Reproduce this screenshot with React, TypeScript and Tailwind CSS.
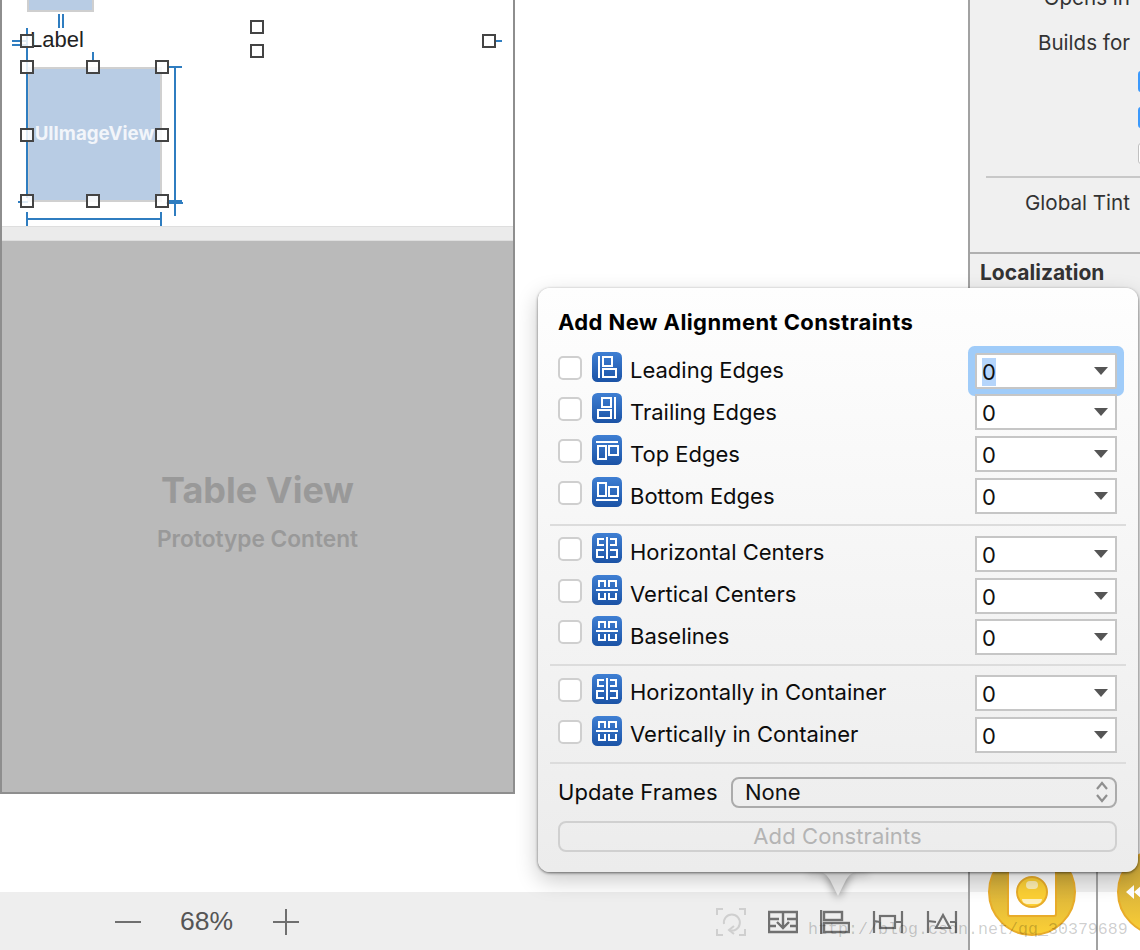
import React from "react";

const SF = "font-['Inter','Liberation_Sans',sans-serif]";

function AlignIcon({ kind }: { kind: string }) {
  const s = "#ffffff";
  return (
    <svg width="30" height="30" viewBox="0 0 30 30" className="shrink-0 -mt-[8px]">
      <defs>
        <linearGradient id={"g" + kind} x1="0" y1="0" x2="0" y2="1">
          <stop offset="0" stopColor="#3f7fd3" />
          <stop offset="1" stopColor="#1b53a6" />
        </linearGradient>
      </defs>
      <rect x="0" y="0" width="30" height="30" rx="5.5" fill={"url(#g" + kind + ")"} />
      <g fill="none" stroke={s} strokeWidth="2">
        {kind === "leading" && (
          <>
            <path d="M7 4v22" />
            <rect x="11" y="5" width="9" height="9" />
            <rect x="11" y="17" width="13" height="8" />
          </>
        )}
        {kind === "trailing" && (
          <>
            <path d="M23 4v22" />
            <rect x="10" y="5" width="9" height="9" />
            <rect x="6" y="17" width="13" height="8" />
          </>
        )}
        {kind === "top" && (
          <>
            <path d="M4 7h22" />
            <rect x="6" y="11" width="8" height="13" />
            <rect x="17" y="11" width="9" height="9" />
          </>
        )}
        {kind === "bottom" && (
          <>
            <path d="M4 23h22" />
            <rect x="6" y="6" width="8" height="13" />
            <rect x="17" y="10" width="9" height="9" />
          </>
        )}
        {kind === "h" && (
          <>
            <path d="M15 4v22" />
            <path d="M12 6H6v6h6M12 17H5v7h7M18 6h6v6h-6M18 17h7v7h-7" />
          </>
        )}
        {kind === "v" && (
          <>
            <path d="M4 15h22" />
            <path d="M7 12V6h6v6M7 18v6h6v-6M17 12V6h7v6M17 18v6h7v-6" />
          </>
        )}
      </g>
    </svg>
  );
}

function Row({
  label,
  icon,
  focused,
  labelClass = "-mt-[2px]",
  boxClass = "",
}: {
  label: string;
  icon: string;
  focused?: boolean;
  labelClass?: string;
  boxClass?: string;
}) {
  return (
    <div className="flex h-[42px] items-center pl-[20px] pr-[21px]">
      <span className="mr-[10px] -mt-[6px] h-[24px] w-[24px] shrink-0 rounded-[5px] border-2 border-[#cfcfcf] bg-white" />
      <AlignIcon kind={icon} />
      <span className={"ml-[8px] flex-1 text-[22px] text-[#0c0c0c] " + labelClass}>{label}</span>
      <div
        className={
          "flex h-[36px] w-[142px] items-center justify-between border-2 border-[#c6c6c6] bg-white pl-[5px] pr-[4px] text-[22px] text-[#111] " +
          (focused ? "rounded-[2px] shadow-[0_0_0_7px_#a0ccf9] " : "") +
          boxClass
        }
      >
        <span className={focused ? "translate-y-[1px] bg-[#b5d5fb] leading-[28px]" : "translate-y-[1px] leading-[28px]"}>0</span>
        <svg width="14" height="8" viewBox="0 0 14 8" className="mr-[3px]">
          <path d="M0 0h14L7 8z" fill="#555" />
        </svg>
      </div>
    </div>
  );
}

function Handle({ x, y }: { x: number; y: number }) {
  return (
    <span
      className="absolute h-[14px] w-[14px] border-2 border-[#444] bg-white/85"
      style={{ left: x - 7, top: y - 7 }}
    />
  );
}

const handles: [number, number][] = [
  [27, 41], [27, 67], [93, 67], [162, 67], [27, 135], [162, 135], [27, 201], [93, 201], [162, 201], [257, 27], [257, 51], [489, 41],
];

function Divider({ className }: { className: string }) {
  return <div className={"mx-[12px] h-[2px] bg-[#dcdcdc] " + className} />;
}

export default function App() {
  return (
    <div className={"relative flex h-[950px] w-[1140px] flex-col overflow-hidden bg-white " + SF}>
      <div className="flex h-[892px] w-full">
        {/* Canvas */}
        <div className="relative h-full w-[968px] shrink-0 bg-white">
          <div className="flex h-[794px] w-[515px] flex-col border-b-2 border-l-2 border-r-2 border-[#8e8e8e] bg-white">
            <div className="h-[226px] shrink-0 bg-white" />
            <div className="h-[15px] shrink-0 border-y border-[#dedede] bg-[#ebebeb]" />
            <div className="flex flex-1 flex-col items-center bg-[#bababa] pt-[227px]">
              <div className="text-[36px] font-bold leading-[44px] text-[#999999]">Table View</div>
              <div className="mt-[13px] text-[22.7px] font-semibold leading-[28px] text-[#999999]">Prototype Content</div>
            </div>
          </div>

          {/* Storyboard objects on the free canvas */}
          <div className="absolute left-[27px] top-[-4px] h-[16px] w-[67px] border-2 border-[#cfcfcf] bg-[#b8cce4]" />
          <div className="absolute left-[30px] top-[24px] text-[22px] leading-[32px] font-['Liberation_Sans',sans-serif] text-[#222]">Label</div>
          <div className="absolute left-[27px] top-[67px] flex h-[135px] w-[135px] items-center justify-center border-2 border-[#d0d0d0] bg-[#b8cce4]">
            <span className="whitespace-nowrap text-[18.7px] font-bold text-[#f2f5fa]">UIImageView</span>
          </div>
          <svg className="absolute left-0 top-0" width="520" height="230" viewBox="0 0 520 230" fill="none" stroke="#2f7dc0" strokeWidth="2">
            <path d="M59 14v14M63 14v14" />
            <path d="M27 28v170M27 212v14" />
            <path d="M12 41h14M12 45h14" />
            <path d="M93 52v10" />
            <path d="M168 67h14M175 67v149M168 201h14M18 202h10M166 203h17" />
            <path d="M27 219h134M161 212v14" />
            <path d="M496 41h6" />
          </svg>
          {handles.map(([x, y]) => (
            <Handle key={x + "-" + y} x={x} y={y} />
          ))}
        </div>

        {/* Inspector */}
        <div className="flex h-full flex-1 flex-col border-l-2 border-[#a2a2a2] bg-[#f0f0f0]">
          <div className="h-[254px] shrink-0 border-b-2 border-[#b0b0b0] text-[20.6px] text-[#333]">
            <div className="-mt-[14px] pr-[10px] text-right leading-[24px]">Opens in</div>
            <div className="mt-[21px] pr-[10px] text-right leading-[24px]">Builds for</div>
            <div className="ml-[16px] mt-[121px] h-[2px] bg-[#c8c8c8]" />
            <div className="mt-[13px] pr-[10px] text-right leading-[24px]">Global Tint</div>
          </div>
          <div className="px-[10px] pt-[6px] text-[21px] font-bold leading-[26px] text-[#333]">Localization</div>
          <div className="absolute right-[-4px] top-[71px] h-[21px] w-[6px] rounded-[4px] bg-[#3b99fc]" />
          <div className="absolute right-[-4px] top-[107px] h-[21px] w-[6px] rounded-[4px] bg-[#3b99fc]" />
          <div className="absolute right-[-4px] top-[143px] h-[21px] w-[6px] rounded-[4px] border border-[#c0c0c0] bg-white" />
        </div>
      </div>

      {/* Bottom bar */}
      <div className="flex h-[58px] w-full">
        <div className="relative flex w-[968px] shrink-0 items-center bg-[#eeeeee] pl-[115px] pt-[2px]">
          <svg width="26" height="4" viewBox="0 0 26 4"><path d="M0 2h26" stroke="#6f6f6f" strokeWidth="2" /></svg>
          <span className="ml-[39px] w-[54px] font-['Liberation_Sans',sans-serif] text-[26.5px] text-[#555]">68%</span>
          <svg className="ml-[38px]" width="28" height="28" viewBox="0 0 28 28"><path d="M14 1v26M1 14h26" stroke="#6f6f6f" strokeWidth="2" /></svg>
          <div className="ml-[416px] flex items-center gap-[22px] text-[#6f6f6f]">
            <svg width="30" height="28" viewBox="0 0 30 28" fill="none" stroke="#cfcfcf" strokeWidth="2">
              <path d="M1 7V1h6M23 1h6v6M1 21v6h6M23 27h6v-6" />
              <path d="M8 16a8 8 0 1 1 5 6" />
              <path d="M18 18l-5 4 5 4" />
            </svg>
            <svg width="30" height="24" viewBox="0 0 30 24" fill="none" stroke="#707070" strokeWidth="2.4">
              <path d="M0 2h30M0 22h30M1 2v20M29 2v20M1 9h10M19 9h10M1 16h7M22 16h7M15 3v15M9 12l6 6 6-6" />
            </svg>
            <svg width="30" height="24" viewBox="0 0 30 24" fill="none" stroke="#707070" strokeWidth="2.4">
              <path d="M1 0v24" />
              <rect x="4" y="2" width="18" height="8" />
              <rect x="4" y="13" width="25" height="9" />
            </svg>
            <svg width="32" height="24" viewBox="0 0 32 24" fill="none" stroke="#707070" strokeWidth="2.2">
              <path d="M2 1v22M30 1v22M2 11l6 1M23 12h7" />
              <rect x="8" y="6" width="15" height="12" />
            </svg>
            <svg width="32" height="24" viewBox="0 0 32 24" fill="none" stroke="#707070" strokeWidth="2.2">
              <path d="M2 1v22M30 1v22M2 11l8 1M24 12h6" />
              <path d="M17 5l7 13H10z" />
            </svg>
          </div>
        </div>
        <div className="relative flex-1 border-l-2 border-[#a2a2a2] bg-white">
          <div className="absolute left-[18px] top-[-44px] flex h-[88px] w-[88px] items-start justify-center rounded-full border-2 border-[#e8ac2a] bg-gradient-to-b from-[#c9a53a] via-[#dcb53a] to-[#fcd035]">
            <div className="mt-[10px] flex h-[57px] w-[50px] items-start justify-center rounded-b-[3px] border-2 border-[#e8ac2a] bg-white pt-[14px]">
              <span className="relative h-[32px] w-[32px] rounded-full border-2 border-[#e8ac2a] bg-[#fcd035]">
                <span className="absolute left-[8px] top-[3px] h-[8px] w-[12px] rounded-full bg-[#fdeeb0]" />
                <span className="absolute bottom-[2px] left-[4px] h-[5px] w-[20px] rounded-b-full bg-white/70" />
              </span>
            </div>
          </div>
          <div className="absolute left-[126px] top-[-64px] h-[122px] w-[2px] bg-[#a2a2a2]" />
          <div className="absolute left-[147px] top-[-44px] flex h-[88px] w-[88px] items-center rounded-full border-2 border-[#e8ac2a] bg-gradient-to-b from-[#c9a53a] via-[#dcb53a] to-[#fcd035] pl-[6px]">
            <svg width="18" height="16" viewBox="0 0 18 16"><path d="M9 1L1 8l8 7zM17 1L9 8l8 7z" fill="#fff" /></svg>
          </div>
        </div>
      </div>

      {/* Popover arrow */}
      <svg className="absolute left-[808px] top-[870px] drop-shadow-[0_2px_4px_rgba(0,0,0,0.45)]" width="60" height="28" viewBox="0 0 60 28">
        <path d="M0 0v2h10c6 0 9 3 12 8l8 16 8-16c3-5 6-8 12-8h10V0z" fill="#ececec" />
      </svg>

      {/* Popover */}
      <div className="absolute left-[538px] top-[288px] flex h-[584px] w-[600px] flex-col rounded-[12px] bg-gradient-to-b from-[#fefefe] to-[#ececec] pb-[20px] shadow-[0_1px_3px_rgba(0,0,0,0.55),0_8px_22px_rgba(0,0,0,0.22)]">
        <div className="h-[62px] pl-[20px] pt-[20px] text-[22px] font-bold leading-[28px] tracking-[0.4px] text-black">Add New Alignment Constraints</div>
        <Row label="Leading Edges" icon="leading" focused labelClass="mt-0" />
        <Row label="Trailing Edges" icon="trailing" labelClass="mt-0" />
        <Row label="Top Edges" icon="top" labelClass="mt-0" />
        <Row label="Bottom Edges" icon="bottom" labelClass="mt-0" />
        <Divider className="mb-[5px] mt-[7px]" />
        <Row label="Horizontal Centers" icon="h" labelClass="mt-[2px]" boxClass="mt-[4px]" />
        <Row label="Vertical Centers" icon="v" labelClass="mt-[2px]" boxClass="mt-[4px]" />
        <Row label="Baselines" icon="v" labelClass="mt-[2px]" boxClass="mt-[4px]" />
        <Divider className="mb-[6px] mt-[8px]" />
        <Row label="Horizontally in Container" icon="h" />
        <Row label="Vertically in Container" icon="v" />
        <Divider className="my-[6px]" />
        <div className="mt-[6px] flex items-center pl-[20px] pr-[21px]">
          <span className="w-[173px] text-[22px] tracking-[0.1px] text-[#0c0c0c]">Update Frames</span>
          <div className="flex h-[31px] flex-1 items-center justify-between rounded-[8px] border-2 border-[#ababab] pl-[12px] pr-[6px] text-[22px] text-[#111]">
            <span>None</span>
            <svg width="14" height="22" viewBox="0 0 14 22" fill="none" stroke="#8f8f8f" strokeWidth="2.2">
              <path d="M2 8l5-6 5 6M2 14l5 6 5-6" />
            </svg>
          </div>
        </div>
        <div className="mx-[20px] mt-[12px] mr-[21px] flex h-[31px] items-center justify-center rounded-[8px] border-2 border-[#d0d0d0] text-[22px] tracking-[0.1px] text-[#b4b4b4]">
          Add Constraints
        </div>
      </div>

      {/* Watermark */}
      <div className="absolute left-[808px] top-[918px] font-['Liberation_Mono',monospace] text-[16.67px] leading-[24px] text-black/20">http://blog.csdn.net/qq_30379689</div>
    </div>
  );
}
